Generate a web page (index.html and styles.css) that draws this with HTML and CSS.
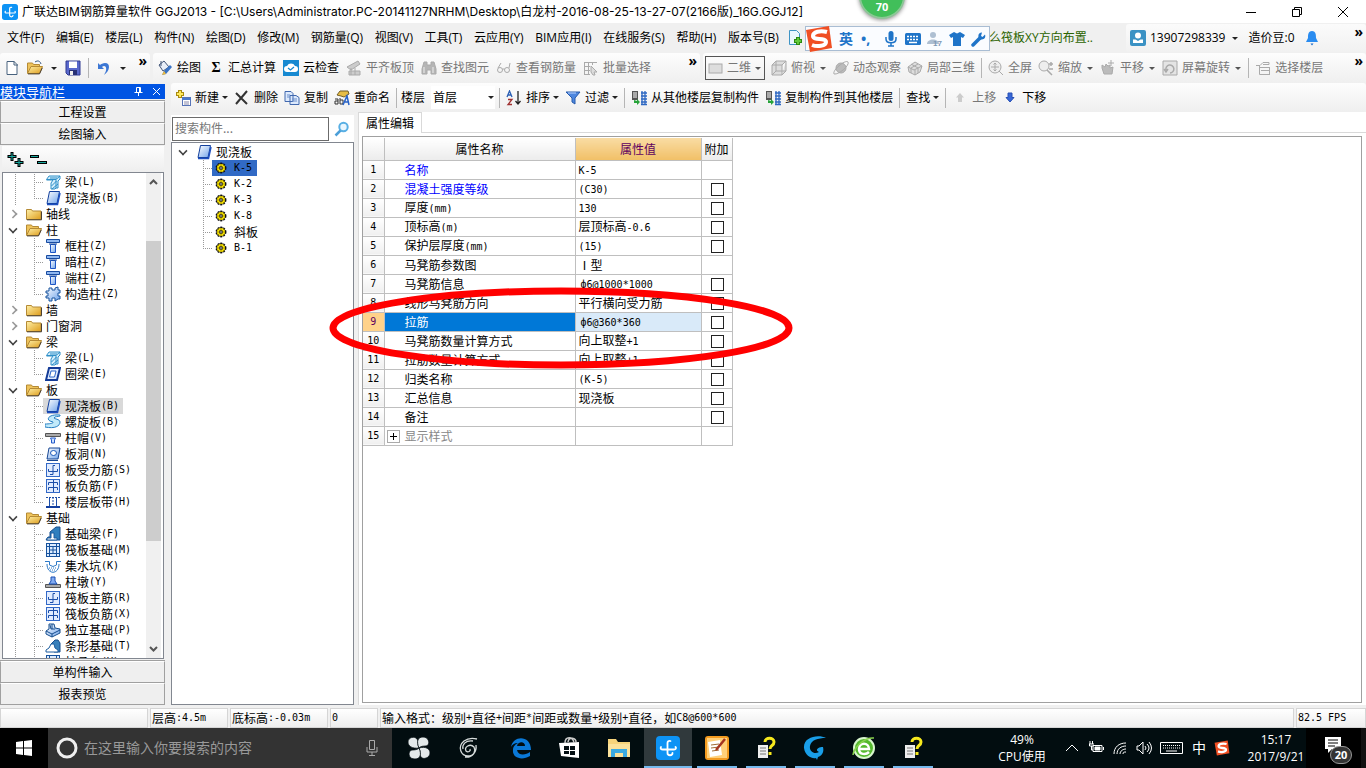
FILE: index.html
```html
<!DOCTYPE html>
<html lang="zh-CN">
<head>
<meta charset="utf-8">
<title>广联达BIM钢筋算量软件 GGJ2013</title>
<link rel="stylesheet" href="styles.css">
</head>
<body>
<svg class="defs" aria-hidden="true">
<defs>
<linearGradient id="gb" x1="0" y1="0" x2="1" y2="1"><stop offset="0" stop-color="#fff"/><stop offset="1" stop-color="#6fa3ea"/></linearGradient>
<linearGradient id="gy" x1="0" y1="0" x2="1" y2="1"><stop offset="0" stop-color="#fff0a8"/><stop offset="1" stop-color="#dd9c1c"/></linearGradient>
</defs>
<symbol id="logo" viewBox="0 0 24 24"><rect width="24" height="24" rx="4" fill="#0d93f5"/><path d="M14.500 5c-2-.5-3 .5-3 2v10c0 3 5 3 5 0M5 11c-1 1.500 0 2.500 2 2.500h11c2 0 2.500-1.500 1.500-2.500" fill="none" stroke="#fff" stroke-width="1.800" stroke-linecap="round"/></symbol>
<symbol id="fold" viewBox="0 0 16 16"><path d="M.5 13.500v-10h5l1 1.500h8.500v8.500z" fill="url(#gy)" stroke="#b58a35"/><path d="M1 13.800h14.500V5.500" fill="none" stroke="#4b4033"/></symbol>
<symbol id="open" viewBox="0 0 16 16"><path d="M.5 13v-10h5l1 1.500h6V7" fill="#eec35b" stroke="#b58a35"/><path d="M.5 13.500 4 6.500h11.500l-3 7z" fill="url(#gy)" stroke="#b58a35"/><path d="M1 13.900h11.500l2.800-6" fill="none" stroke="#4b4033"/></symbol>
<symbol id="slab" viewBox="0 0 16 16"><path d="M4.500 1.500h10l-2.500 12h-10z" fill="url(#gb)" stroke="#123f9c"/><path d="M2 14.500h10.500L15 3" fill="none" stroke="#1d4fc0" stroke-width="1.500"/></symbol>
<symbol id="beam" viewBox="0 0 16 16"><path d="M1.500 5.500 4 2h11v3l-2 2v7h-2l-1 1H6V9l2-3H1.500z" fill="#d3eefb" stroke="#2f8fc8"/><path d="M2 5.500h9l4-3.500M6.500 12l5-5M7 15l6-5M11 6v8M5 4h7" stroke="#2f8fc8" fill="none"/></symbol>
<symbol id="col" viewBox="0 0 16 16"><path d="M1.500 1.500h13v3h-13z" fill="#8fb7f0" stroke="#184ba0"/><path d="M5.500 6.500h5v8h-5z" fill="url(#gb)" stroke="#1d55c5"/><path d="M2 4.500h12M4 6h8" stroke="#184ba0"/></symbol>
<symbol id="gz" viewBox="0 0 16 16"><path d="M4 2h3v2h3V2l3-1v3h2v3h-2v3h2v3h-2l-3 2v-3H7v3H4v-3H1v-2h2V7H1V5h3z" fill="url(#gb)" stroke="#17529d"/></symbol>
<symbol id="ring" viewBox="0 0 16 16"><path d="M4 2h11l-3 12H1z" fill="#dfeafd" stroke="#143b97" stroke-width="2"/><path d="M6 5h5l-1.500 6h-5z" fill="#fff" stroke="#2c66c9"/></symbol>
<symbol id="spiral" viewBox="0 0 16 16"><path d="M15 1C4 0 1 5 5 7l3 1c1 1-3 2-8 2v3c10 2 15-1 15-5 0-3-6-3-6-4 1-2 4-1 6-2z" fill="#c2eafa" stroke="#277fc2"/></symbol>
<symbol id="cap" viewBox="0 0 16 16"><path d="M.5 3.500h15v3H.5z" fill="#aaa" stroke="#555"/><path d="M5.500 8h5l-1 2v3h-3v-3z" fill="#cce1ff" stroke="#2359c8"/></symbol>
<symbol id="hole" viewBox="0 0 16 16"><path d="M4 2h11l-2 11H2z" fill="url(#gb)" stroke="#174693"/><ellipse cx="8.500" cy="7" rx="3" ry="2.500" fill="#fff" stroke="#1958b8"/><path d="M2 14.500h11" stroke="#174693"/></symbol>
<symbol id="bar1" viewBox="0 0 16 16"><rect x="1.500" y="1.500" width="13" height="13" fill="#e1ecff" stroke="#3369c7"/><path d="M10 3.500H8v9H5M3.500 7v2.500h9V7" stroke="#1d4fa9" fill="none"/></symbol>
<symbol id="bar2" viewBox="0 0 16 16"><rect x="1.500" y="1.500" width="13" height="13" fill="#e1ecff" stroke="#3369c7"/><path d="M8.500 2v12M3.500 7V4.500h9V7M3.500 12V9.500h9V12" stroke="#1d4fa9" fill="none"/></symbol>
<symbol id="band" viewBox="0 0 16 16"><path d="M1 13h14" stroke="#123e9f" stroke-width="2"/><path d="M4.500 4v8M11.500 4v8" stroke="#1d4fa9"/><path d="M1 3.500h14M8 3v9" stroke="#1d4fa9" stroke-dasharray="2 1"/></symbol>
<symbol id="fbeam" viewBox="0 0 16 16"><path d="m1 14 2-3h2V6l6-5h4v13z" fill="#2f7fbe" stroke="#174e8e"/><path d="M2 14v-2h4V7h3v5h3v2z" fill="#fff" stroke="#1c5d9f"/></symbol>
<symbol id="raft" viewBox="0 0 16 16"><rect x="1.500" y="1.500" width="13" height="13" fill="#dcecff" stroke="#17529d"/><path d="M4.500 1v14M11.500 1v14M1 4.500h14M1 11.500h14M4 8h8M8 4v8" stroke="#17529d" fill="none"/></symbol>
<symbol id="pit" viewBox="0 0 16 16"><path d="M0 3.500h4.500V7q3.500 3 7 0V3.500H16M2 6c0 11 12 11 12 0" fill="none" stroke="#2c79c8"/><path d="M4 10h8M5 12h6" stroke="#2c79c8" stroke-dasharray="1 1"/></symbol>
<symbol id="pier" viewBox="0 0 16 16"><path d="M.5 10.500h15v3H.5z" fill="#aaa" stroke="#555"/><path d="m4 10 2-3V3h4v4l2 3z" fill="#82abf1" stroke="#184fb3"/></symbol>
<symbol id="indep" viewBox="0 0 16 16"><path d="m1 9 3-2V2h5l1 4 5 1v4l-8 4-6-3z" fill="url(#gb)" stroke="#174e8e"/><path d="m1 9 6 3 8-4M7 12v3M5 3l1 4h4M7 2v5" fill="none" stroke="#174e8e"/></symbol>
<symbol id="strip" viewBox="0 0 16 16"><path d="m6 6 4-4h3l2 3v9H9z" fill="#377fba" stroke="#174e8e"/><path d="M1 14v-2l3-2 2-4h3l1 4 3 2v2z" fill="#fff" stroke="#1c5d9f"/></symbol>
<symbol id="gear" viewBox="0 0 12 12"><circle cx="6" cy="6" r="4.700" fill="#111" stroke="#111" stroke-width="1.500" stroke-dasharray="1.800 1.200"/><circle cx="6" cy="6" r="4" fill="#ffe900"/><path d="M6 2v8M2 6h8M3 3l6 6M9 3l-6 6" stroke="#665b00" stroke-width=".6"/><circle cx="6" cy="6" r="1.300" fill="#fff" stroke="#111"/></symbol>
<symbol id="copyfl" viewBox="0 0 16 16"><path d="M1 1h6v9H1z" fill="#555"/><path d="M2 3h4M2 5h4M2 7h4" stroke="#fff"/><path d="M11 1v14M14 1v14M10 3h6M10 6h6M10 9h6M10 12h6M10 14.500h6" stroke="#2d67c2" stroke-width="1.300"/><path d="M3 10v3h3v2l3-3-3-3v2z" fill="#27a33a"/></symbol>
<symbol id="help" viewBox="0 0 24 24"><path d="M4 9h10v13H4z" fill="#eee"/><path d="M6 12h6M6 15h6M6 18h6" stroke="#777"/><path d="M11 6c0-5 9-5 9 0 0 4-4 3-4 7M16 16v3" fill="none" stroke="#f7e91d" stroke-width="3"/></symbol>
<symbol id="sogou" viewBox="0 0 28 28"><path d="M1 5 24 1l3 22-22 4z" fill="#f04f23"/><path d="M22 7C15 5 8 7 8 11c0 5 13 1 13 6 0 4-9 5-14 3" fill="none" stroke="#fff" stroke-width="4"/></symbol>
</svg>

<div class="window">
<header class="title">
  <svg class="i16"><use href="#logo"/></svg>
  <h1>广联达BIM钢筋算量软件 GGJ2013 - [C:\Users\Administrator.PC-20141127NRHM\Desktop\白龙村-2016-08-25-13-27-07(2166版)_16G.GGJ12]</h1>
  <div class="winbtns">
    <button aria-label="最小化"><svg viewBox="0 0 12 12"><path d="M1 6.500h10" /></svg></button>
    <button aria-label="还原"><svg viewBox="0 0 12 12"><path d="M1.500 3.500h7v7h-7zM3.500 3V1.500h7v7H9"/></svg></button>
    <button aria-label="关闭"><svg viewBox="0 0 12 12"><path d="m1 1 10 10M11 1 1 11"/></svg></button>
  </div>
</header>
<div class="ball">70</div>

<div class="menubar">
  <nav class="menus">
    <button>文件(F)</button><button>编辑(E)</button><button>楼层(L)</button><button>构件(N)</button><button>绘图(D)</button><button>修改(M)</button><button>钢筋量(Q)</button><button>视图(V)</button><button>工具(T)</button><button>云应用(Y)</button><button>BIM应用(I)</button><button>在线服务(S)</button><button>帮助(H)</button><button>版本号(B)</button>
  </nav>
  <button class="newdoc" aria-label="新建文档"><svg class="i16" viewBox="0 0 16 16"><path d="M2.500.5h7l3 3v11h-10z" fill="#eaf7ff" stroke="#3f94c5"/><path d="M11 7v8M7 11h8" stroke="#2c8a12" stroke-width="4"/><path d="M11 8v6M8 11h6" stroke="#62c93a" stroke-width="2"/></svg></button>
  <a class="tip" href="#">么筏板XY方向布置..</a>
  <div class="account">
    <button><svg class="i16" viewBox="0 0 16 16"><rect width="16" height="16" rx="2" fill="#3b92c4"/><circle cx="8" cy="5.500" r="3" fill="#fff"/><path d="M3 13V9.500h2.500L8 11l2.500-1.500H13V13z" fill="#fff"/></svg><span>13907298339</span><i class="dd"></i></button>
    <span>造价豆:0</span>
    <svg class="i16" viewBox="0 0 16 16"><path d="M8 1c-4 0-4 4-4 7l-2 4h12l-2-4c0-3 0-7-4-7z" fill="#2a8cf0"/><path d="M6.500 13.500h3L8 15.500z" fill="#1769c9"/></svg>
    <button class="more">»</button>
  </div>
  <div class="ime">
    <svg class="sg"><use href="#sogou"/></svg><b>英</b><b>•,</b>
    <svg class="i16" viewBox="0 0 16 16"><rect x="5.500" y="0" width="5" height="10" rx="2.500" fill="#1f74c8"/><path d="M3 6v2c0 5 10 5 10 0V6M8 12v3M5 15h6" fill="none" stroke="#1f74c8" stroke-width="1.500"/></svg>
    <svg class="i16" viewBox="0 0 16 16"><rect y="2" width="16" height="12" rx="1.500" fill="#1f74c8"/><path d="M2 5.500h12M2 8.500h12" stroke="#fff" stroke-width="1.500" stroke-dasharray="2 1"/><path d="M4 11.500h8" stroke="#fff" stroke-width="1.500"/></svg>
    <svg class="i16" viewBox="0 0 16 16"><circle cx="6" cy="4" r="3" fill="#aebfd2"/><path d="M0 13c0-6 12-6 12 0z" fill="#aebfd2"/><text x="6" y="15" class="n17">17</text></svg>
    <svg class="i16" viewBox="0 0 16 16"><path d="m5 1 3 1.500L11 1l5 3-2 3-2-1v9H4V6L2 7 0 4z" fill="#1f74c8"/></svg>
    <svg class="i16" viewBox="0 0 16 16"><path d="M2 14 9 7" stroke="#1f74c8" stroke-width="3.500" stroke-linecap="round"/><path d="M14 3.500A3.500 3.500 0 1 1 11 1.500L10 5l1.500 1z" fill="#1f74c8"/></svg>
  </div>
</div>

<div class="bars">
  <div class="bar quick">
    <button aria-label="新建"><svg class="i16" viewBox="0 0 16 16"><path d="M3 1.500h7l3 3v10H3z" fill="#fff" stroke="#48627e"/><path d="M10 1v4h4" fill="none" stroke="#48627e"/></svg></button>
    <button aria-label="打开"><svg class="i16" viewBox="0 0 16 16"><use href="#open"/><path d="M8 2c3-2 5-1 6 2" fill="none" stroke="#375a84"/></svg><i class="dd"></i></button>
    <button aria-label="保存"><svg class="i16" viewBox="0 0 16 16"><path d="M1 1h14v14H3l-2-2z" fill="#5968cc" stroke="#303a91"/><path d="M4 1.500h8V8H4z" fill="#fff"/><path d="M4 10h8v5H4z" fill="#273075"/><path d="M5 11h3v4H5z" fill="#eee"/></svg></button>
    <i class="sep"></i>
    <button aria-label="撤销"><svg class="i16" viewBox="0 0 16 16"><path d="M2 3v6h6L6 7c3-3 6 1 3 6l-1 2c6-4 7-12 1-12-2 0-4 1-5 2z" fill="#3c77d4"/></svg><i class="dd"></i></button>
    <button class="more">»</button>
  </div>
  <div class="bar draw">
    <button><svg class="i16" viewBox="0 0 16 16"><path d="m2 5 5-4 5 6-6 4z" fill="#e8eef8" stroke="#405477"/><path d="M4 1v5" stroke="#405477"/><path d="m15 7-6 7-4 1 2-4 6-6z" fill="#3973c6"/><path d="m7 11 2 3-4 1z" fill="#f2bd3b"/></svg>绘图</button>
    <button><span class="sigma">Σ</span>汇总计算</button>
    <button><svg class="i16" viewBox="0 0 16 16"><rect width="16" height="16" fill="#1689d1"/><path d="M4 12a3 3 0 0 1 0-6 4.500 4.500 0 0 1 8 0 3 3 0 0 1 0 6z" fill="#fff"/><path d="m5 8 2.500 2L11 7" fill="none" stroke="#1689d1" stroke-width="1.300"/></svg>云检查</button>
    <button disabled><svg class="i16" viewBox="0 0 16 16"><path d="m1 7 11-6 2 3-9 6zM3 11h11v4H3z" fill="#ccc"/><path d="M5 8v7M9 8v7"/></svg>平齐板顶</button>
    <button disabled><svg class="i16" viewBox="0 0 16 16"><path d="M3 2h3v3h4V2h3l2 7v5h-5v-4H6v4H1V9z" fill="#b5b5b5"/><path d="M3 7v6M12 7v6" stroke="#eee"/></svg>查找图元</button>
    <button disabled><svg class="i16" viewBox="0 0 16 16"><circle cx="4" cy="10" r="2.500"/><circle cx="11" cy="10" r="2.500"/><path d="M2 8 5 3M13 8l1-5M6.500 9h2"/></svg>查看钢筋量</button>
    <button disabled><svg class="i16" viewBox="0 0 16 16"><path d="M1 2.500h13M1 6.500h6M1 10.500h6M1.500 2v12M5.500 2v12M9.500 2v3M1 14.500h6"/><path d="m8 6 6 6h-3l1 3-2 0-2-3z" fill="#ddd"/></svg>批量选择</button>
    <button class="more">»</button>
  </div>
  <div class="bar view">
    <button class="combo" disabled><svg class="i16" viewBox="0 0 16 16"><rect x="1" y="4" width="13" height="9" fill="#ddd"/></svg>二维<i class="dd"></i></button>
    <button disabled><svg class="i16" viewBox="0 0 16 16"><path d="M1 5h10v10H1zM1 5l4-4h10L11 5M15 1v10l-4 4" fill="#ddd"/><path d="M5 1v10h10M5 11l-4 4"/></svg>俯视<i class="dd"></i></button>
    <button disabled><svg class="i16" viewBox="0 0 16 16"><circle cx="8" cy="8" r="5" fill="#bbb"/><path d="M1 14C-1 10 13-1 15 2s-9 13-14 12z"/></svg>动态观察</button>
    <button disabled><svg class="i16" viewBox="0 0 16 16"><path d="m1 7 7-5 7 4-2 6-5 3-6-3z" fill="#ddd"/><path d="m1 7 6 3 8-4M8 10v5M4 4l7 4v5M11 4 4 8v5"/></svg>局部三维</button>
    <i class="sep"></i>
    <button disabled><svg class="i16" viewBox="0 0 16 16"><circle cx="7" cy="7" r="6" fill="#eee"/><path d="M7 3v8M3 7h8M5.500 4.500 7 3l1.500 1.500M5.500 9.500 7 11l1.500-1.500M11 11l4 4"/></svg>全屏</button>
    <button disabled><svg class="i16" viewBox="0 0 16 16"><circle cx="6" cy="6" r="5" fill="#eee"/><path d="m9 10 5 5M11 4h4M13 2v4M11 9h4" stroke-width="1.500"/></svg>缩放<i class="dd"></i></button>
    <button disabled><svg class="i16" viewBox="0 0 16 16"><path d="M2 8V5l3 2 1-3 2 2 2-1v3l3-1-1 7H4z" fill="#bbb"/><path d="M11 0v6M8 3h6"/></svg>平移<i class="dd"></i></button>
    <button disabled><svg class="i16" viewBox="0 0 16 16"><path d="M1 1h14v14H1z" fill="#e4e4e4"/><path d="M4 10a4 4 0 1 1 4 3M2 9l2 3 2-3" stroke-width="1.500"/></svg>屏幕旋转<i class="dd"></i></button>
    <i class="sep"></i>
    <button disabled><svg class="i16" viewBox="0 0 16 16"><path d="M1 5.500h4l3-3h6v2H8M4.500 5v9.500H15M4 7.500h10M6 10.500h8M14.500 7v7"/></svg>选择楼层</button>
    <button class="more">»</button>
  </div>
</div>

<div class="work">
  <aside class="dock">
    <div class="dockhead"><h2>模块导航栏</h2>
      <button aria-label="固定"><svg viewBox="0 0 9 9"><path d="M2.500 5V.5h4V5M5.500 1v4M.5 5.500h8M4.500 6v3"/></svg></button>
      <button aria-label="关闭"><svg viewBox="0 0 9 9"><path d="m1 1 7 7M8 1 1 8"/></svg></button>
    </div>
    <button class="mod">工程设置</button>
    <button class="mod">绘图输入</button>
    <div class="navbox">
      <div class="plusminus">
        <button aria-label="全部展开"><svg viewBox="0 0 17 15"><path d="M5 0v9M.5 4.500h9M12 6v9M7.500 10.500h9" stroke="#000" stroke-width="3"/><path d="M5 1v7M1.500 4.500h7M12 7v7M8.500 10.500h7" stroke="#18a79d"/></svg></button>
        <button aria-label="全部折叠"><svg viewBox="0 0 17 15"><path d="M0 4.500h9M7 10.500h10" stroke="#000" stroke-width="3"/><path d="M1 4.500h7M8 10.500h8" stroke="#18a79d"/></svg></button>
      </div>
      <div class="treewrap">
        <div class="tree">
          <ul class="kids"><li><button><svg><use href="#beam"/></svg>梁<s>(L)</s></button></li><li><button><svg><use href="#slab"/></svg>现浇板<s>(B)</s></button></li></ul>
          <button class="par shut"><svg><use href="#fold"/></svg>轴线</button>
          <button class="par"><svg><use href="#open"/></svg>柱</button>
          <ul class="kids"><li><button><svg><use href="#col"/></svg>框柱<s>(Z)</s></button></li><li><button><svg><use href="#col"/></svg>暗柱<s>(Z)</s></button></li><li><button><svg><use href="#col"/></svg>端柱<s>(Z)</s></button></li><li><button><svg><use href="#gz"/></svg>构造柱<s>(Z)</s></button></li></ul>
          <button class="par shut"><svg><use href="#fold"/></svg>墙</button>
          <button class="par shut"><svg><use href="#fold"/></svg>门窗洞</button>
          <button class="par"><svg><use href="#open"/></svg>梁</button>
          <ul class="kids"><li><button><svg><use href="#beam"/></svg>梁<s>(L)</s></button></li><li><button><svg><use href="#ring"/></svg>圈梁<s>(E)</s></button></li></ul>
          <button class="par"><svg><use href="#open"/></svg>板</button>
          <ul class="kids"><li><button class="cur"><svg><use href="#slab"/></svg>现浇板<s>(B)</s></button></li><li><button><svg><use href="#spiral"/></svg>螺旋板<s>(B)</s></button></li><li><button><svg><use href="#cap"/></svg>柱帽<s>(V)</s></button></li><li><button><svg><use href="#hole"/></svg>板洞<s>(N)</s></button></li><li><button><svg><use href="#bar1"/></svg>板受力筋<s>(S)</s></button></li><li><button><svg><use href="#bar2"/></svg>板负筋<s>(F)</s></button></li><li><button><svg><use href="#band"/></svg>楼层板带<s>(H)</s></button></li></ul>
          <button class="par"><svg><use href="#open"/></svg>基础</button>
          <ul class="kids"><li><button><svg><use href="#fbeam"/></svg>基础梁<s>(F)</s></button></li><li><button><svg><use href="#raft"/></svg>筏板基础<s>(M)</s></button></li><li><button><svg><use href="#pit"/></svg>集水坑<s>(K)</s></button></li><li><button><svg><use href="#pier"/></svg>柱墩<s>(Y)</s></button></li><li><button><svg><use href="#bar1"/></svg>筏板主筋<s>(R)</s></button></li><li><button><svg><use href="#bar2"/></svg>筏板负筋<s>(X)</s></button></li><li><button><svg><use href="#indep"/></svg>独立基础<s>(P)</s></button></li><li><button><svg><use href="#strip"/></svg>条形基础<s>(T)</s></button></li><li><button><svg><use href="#raft"/></svg>桩承台<s>(V)</s></button></li></ul>
        </div>
        <div class="scroll"><svg viewBox="0 0 9 6"><path d="m1 5 3.500-3.500L8 5"/></svg><i></i><svg viewBox="0 0 9 6"><path d="m1 1 3.500 3.500L8 1"/></svg></div>
      </div>
    </div>
    <button class="mod">单构件输入</button>
    <button class="mod">报表预览</button>
  </aside>

  <section class="main">
    <div class="bar edit">
      <button><svg class="i16" viewBox="0 0 16 16"><path d="M5 0v8M1 4h8" stroke="#a98a10" stroke-width="4"/><path d="M5 1v6M2 4h6" stroke="#ffe95b" stroke-width="2"/><rect x="7.500" y="7.500" width="8" height="8" fill="#fff" stroke="#5774b8"/><path d="M7 9h9" stroke="#4778ce" stroke-width="2"/><path d="M9 12h5M9 14h5" stroke="#88a"/></svg>新建<i class="dd"></i></button>
      <button><svg class="i16" viewBox="0 0 16 16"><path d="m2 3 11 11M13 1 2 14" stroke="#333" stroke-width="2"/></svg>删除</button>
      <button><svg class="i16" viewBox="0 0 16 16"><path d="M1 1.500h6l2 2v8H1zM6 5.500h6l3 2v7H6z" fill="#dce9fc" stroke="#4168ae"/><path d="M8 9h5M8 11h5M3 5h3M3 7h3" stroke="#6d8fcb"/></svg>复制</button>
      <button><svg class="i16" viewBox="0 0 16 16"><path d="m3 5 3-4h8l1 3-5 3-3-1z" fill="#e7bd45" stroke="#735e28"/><path d="M1 9h3v5H1v-3h3M6 8v6h3v-4H6" fill="none" stroke="#333"/><path d="m9 15 4-9 2 9M11 12h4" fill="none" stroke="#2863c8" stroke-width="1.500"/></svg>重命名</button>
      <i class="sep"></i>
      <label for="floor">楼层</label>
      <span class="floor"><select id="floor"><option>首层</option></select><i class="dd"></i></span>
      <i class="sep"></i>
      <button><svg class="i16" viewBox="0 0 16 16"><path d="m1 7 2.500-6L6 7M2 5h3" stroke="#2b5fb4" fill="none" stroke-width="1.300"/><path d="M2 9.500h4l-4 5h4" stroke="#a03030" fill="none" stroke-width="1.300"/><path d="M12 1v13M9.500 11l2.500 3 2.500-3" fill="none" stroke="#222" stroke-width="1.300"/></svg>排序<i class="dd"></i></button>
      <button><svg class="i16" viewBox="0 0 16 16"><path d="M1 2h14L10 8v6l-3-2V8z" fill="#4e87df" stroke="#275aab"/><path d="M3 3h8" stroke="#b9d4ff"/></svg>过滤<i class="dd"></i></button>
      <i class="sep"></i>
      <button><svg class="i16"><use href="#copyfl"/></svg>从其他楼层复制构件</button>
      <button><svg class="i16"><use href="#copyfl"/></svg>复制构件到其他楼层</button>
      <i class="sep"></i>
      <button>查找<i class="dd"></i></button>
      <i class="sep"></i>
      <button disabled><svg class="i16" viewBox="0 0 16 16"><path d="m8 3 4 4.500h-2V12H6V7.500H4z" fill="#ccc"/></svg>上移</button>
      <button><svg class="i16" viewBox="0 0 16 16"><path d="m8 12 4-4.500h-2V3H6v4.500H4z" fill="#3767d6" stroke="#2850b5"/></svg>下移</button>
    </div>
    <div class="panes">
      <div class="parts">
        <div class="search"><input type="text" placeholder="搜索构件..." aria-label="搜索构件"><button aria-label="搜索"><svg class="i16" viewBox="0 0 16 16"><circle cx="9.500" cy="6" r="4.200" fill="#e8f6ff" stroke="#58afe4" stroke-width="2"/><path d="m6.500 9.500-5 5" stroke="#4c9fd8" stroke-width="2.500"/></svg></button></div>
        <div class="list">
          <button class="par"><svg><use href="#slab"/></svg>现浇板</button>
          <ul class="kids"><li><button class="sel"><svg><use href="#gear"/></svg><s>K-5</s></button></li><li><button><svg><use href="#gear"/></svg><s>K-2</s></button></li><li><button><svg><use href="#gear"/></svg><s>K-3</s></button></li><li><button><svg><use href="#gear"/></svg><s>K-8</s></button></li><li><button><svg><use href="#gear"/></svg>斜板</button></li><li><button><svg><use href="#gear"/></svg><s>B-1</s></button></li></ul>
        </div>
      </div>
      <div class="props">
        <div class="tabs"><button>属性编辑</button></div>
        <div class="page"><div class="frame">
          <table>
            <colgroup><col class="c1"><col class="c2"><col class="c3"><col class="c4"></colgroup>
            <thead><tr><th></th><th>属性名称</th><th class="hot">属性值</th><th>附加</th></tr></thead>
            <tbody>
              <tr><th>1</th><td class="blue">名称</td><td><s>K-5</s></td><td></td></tr>
              <tr><th>2</th><td class="blue">混凝土强度等级</td><td><s>(C30)</s></td><td><input type="checkbox" aria-label="附加 混凝土强度等级"></td></tr>
              <tr><th>3</th><td>厚度<s>(mm)</s></td><td><s>130</s></td><td><input type="checkbox" aria-label="附加 厚度"></td></tr>
              <tr><th>4</th><td>顶标高<s>(m)</s></td><td>层顶标高<s>-0.6</s></td><td><input type="checkbox" aria-label="附加 顶标高"></td></tr>
              <tr><th>5</th><td>保护层厚度<s>(mm)</s></td><td><s>(15)</s></td><td><input type="checkbox" aria-label="附加 保护层厚度"></td></tr>
              <tr><th>6</th><td>马凳筋参数图</td><td>Ⅰ型</td><td></td></tr>
              <tr><th>7</th><td>马凳筋信息</td><td class="rb"><s>ф6@1000*1000</s></td><td><input type="checkbox" aria-label="附加 马凳筋信息"></td></tr>
              <tr><th>8</th><td>线形马凳筋方向</td><td>平行横向受力筋</td><td><input type="checkbox" aria-label="附加 线形马凳筋方向"></td></tr>
              <tr class="active"><th>9</th><td>拉筋</td><td class="rb"><s>ф6@360*360</s></td><td><input type="checkbox" aria-label="附加 拉筋"></td></tr>
              <tr><th>10</th><td>马凳筋数量计算方式</td><td>向上取整<s>+1</s></td><td><input type="checkbox" aria-label="附加 马凳筋数量计算方式"></td></tr>
              <tr><th>11</th><td>拉筋数量计算方式</td><td>向上取整<s>+1</s></td><td><input type="checkbox" aria-label="附加 拉筋数量计算方式"></td></tr>
              <tr><th>12</th><td>归类名称</td><td><s>(K-5)</s></td><td><input type="checkbox" aria-label="附加 归类名称"></td></tr>
              <tr><th>13</th><td>汇总信息</td><td>现浇板</td><td><input type="checkbox" aria-label="附加 汇总信息"></td></tr>
              <tr><th>14</th><td>备注</td><td></td><td><input type="checkbox" aria-label="附加 备注"></td></tr>
              <tr class="grp"><th>15</th><td><button aria-label="展开"><svg viewBox="0 0 9 9"><path d="M4.500 1v7M1 4.500h7"/></svg></button>显示样式</td><td></td><td></td></tr>
            </tbody>
          </table>
          <svg class="mark" viewBox="0 0 464 82"><ellipse cx="232" cy="41" rx="228" ry="37"/></svg>
        </div></div>
      </div>
    </div>
  </section>
</div>

<footer class="status">
  <span class="s1"></span><span class="s2">层高<s>:4.5m</s></span><span class="s3">底标高<s>:-0.03m</s></span><span class="s4"><s>0</s></span><span class="s5">输入格式：级别<s>+</s>直径<s>+</s>间距<s>*</s>间距或数量<s>+</s>级别<s>+</s>直径，如<s>C8@600*600</s></span><span class="s6"><s>82.5 FPS</s></span>
</footer>
</div>

<div class="taskbar">
  <button class="start" aria-label="开始"><svg viewBox="0 0 16 16"><path d="m0 2 7-1v6.500H0zM8 1l8-1v7.500H8zM0 8.500h7V15l-7-1zM8 8.500h8V16l-8-1z" fill="#fff"/></svg></button>
  <div class="find"><svg class="cort" viewBox="0 0 22 22"><circle cx="11" cy="11" r="9"/></svg><input type="text" placeholder="在这里输入你要搜索的内容" aria-label="搜索"><svg class="i16" viewBox="0 0 16 16"><path d="M5.500.5h5v9h-5zM3 7v5h10V7M8 12v3M5 15.500h6" fill="none" stroke="#aaa"/></svg></div>
  <div class="apps">
    <button aria-label="风扇"><svg viewBox="0 0 24 24"><g fill="#e4e9ea" stroke="#020d10" stroke-width=".8"><path d="M12 12C5 13 1 10 1 6c0-5 7-6 9-3 2 2 0 5 2 9z"/><path d="M12 12C9 5 11 1 16 1c5 0 7 5 5 8-2 2-6 0-9 3z"/><path d="M12 12c7-2 11 1 11 5 0 5-7 7-9 4-2-2 0-5-2-9z"/><path d="M12 12c3 7 1 11-4 11-6 0-7-5-5-8 2-2 6 0 9-3z"/></g></svg></button>
    <button aria-label="浏览器"><svg viewBox="0 0 24 24"><path d="M21 3c-4-1-9-1-13 2-7 6-3 15 4 15 6 0 8-5 6-9-4-4-10 0-8 4 2 2 5 0 4-2M20 9c1 7-4 13-11 12M17 5C9 4 6 9 7 13" fill="none" stroke="#d7dcdc" stroke-width="1.300"/></svg></button>
    <button class="pinned" aria-label="Edge"><svg viewBox="0 0 24 24"><path d="M2 11C4-1 22-1 22 14H8c1 6 9 5 13 2v4C13 25 3 22 4 14c0-4 3-6 5-7-4 0-6 2-7 4zm6-1h8c0-5-7-5-8 0z" fill="#0a78d7"/></svg></button>
    <button aria-label="商店"><svg viewBox="0 0 24 24"><path d="m1 7 20-1v16L3 20z" fill="#fff"/><path d="M7 7c0-7 8-7 9 0M10 6c1-6 8-4 8 0" fill="none" stroke="#ccc" stroke-width="1.500"/><path d="M6 10h5v4H6zM12 10h5v4h-5zM6 15h5v3H6zM12 15h5v4h-5z" fill="#051014"/></svg></button>
    <button aria-label="资源管理器"><svg viewBox="0 0 24 24"><path d="M1 3h8l2 3h12v15H1z" fill="#f7d47b"/><path d="M1 8h22v13H1z" fill="#fce29b"/><path d="M4 21v-8h16v8h-4v-4H8v4z" fill="#3aaae2"/></svg></button>
    <button class="on" aria-label="GGJ"><svg><use href="#logo"/></svg></button>
    <button class="run" aria-label="笔记"><svg viewBox="0 0 24 24"><rect width="24" height="24" rx="3" fill="#f39b20"/><rect x="2" y="2" width="20" height="20" fill="#ffd079"/><path d="m3 6 12-2 2 15-12 2z" fill="#fff"/><path d="m6 9 8-1M6 12l8-1M7 15l7-1" stroke="#a06b35"/><path d="m11 14 9-11" stroke="#a4331f" stroke-width="2.500"/></svg></button>
    <button class="run" aria-label="帮助文件"><svg><use href="#help"/></svg></button>
    <button class="run" aria-label="广联达"><svg viewBox="0 0 24 24"><path d="M23 2C15-2 0 1 1 12c1 8 8 11 12 10l1 2 1-3c5-2 6-6 5-10-6 0-8 4-4 5-5 3-10-1-9-6 1-6 8-8 16-8z" fill="#199ee8"/></svg></button>
    <button class="run" aria-label="360"><svg viewBox="0 0 24 24"><circle cx="12" cy="12" r="10" fill="#55b92e" stroke="#d8f6cd" stroke-width="2"/><path d="M7 13h10c0-7-10-7-10 0 0 6 7 6 10 3" fill="none" stroke="#fff" stroke-width="2.500"/><path d="M1 19C2 11 13 1 22 2" fill="none" stroke="#89d24e" stroke-width="1.500"/></svg></button>
    <button class="run" aria-label="帮助文件 2"><svg><use href="#help"/></svg></button>
  </div>
  <div class="cpu">49%<br>CPU使用</div>
  <div class="tray">
    <svg class="i16" viewBox="0 0 16 16"><path d="m2 11 6-6 6 6"/></svg>
    <svg class="i16" viewBox="0 0 16 16"><path d="M5 5.500h9v6H5zM1 4h5M2 1v3M4.500 1v3M1.500 4v2h4M3.500 6v4H5M15.500 7v3"/><path d="M7 7h5v3H7z" fill="#fff"/></svg>
    <svg class="i16" viewBox="0 0 16 16"><path d="M2 14C2 7 7 3 14 3M5 14c0-5 4-8 9-8M8 14c0-3 3-5 6-5M11 14c0-2 1-2 3-2" /></svg>
    <svg class="i16" viewBox="0 0 16 16"><path d="M1 6v4h2l4 4V2L3 6zM9 6q2 2 0 4M11 4q4 4 0 8M13 2q5 6 0 12"/></svg>
    <svg class="kb" viewBox="0 0 24 14"><path d="M.5 1.500h22v11H.5z"/><path d="M3 4.500h18M3 7h18" stroke-dasharray="1 1"/><path d="M6 10h11"/></svg>
    <span>中</span>
    <svg class="i16"><use href="#sogou"/></svg>
  </div>
  <div class="clock">15:17<br>2017/9/21</div>
  <button class="note" aria-label="通知"><svg viewBox="0 0 28 28"><path d="M2 3h16v12H9l-4 4v-4H2z" fill="#fff"/><path d="M5 6h10M5 9h10M5 12h7" stroke="#000"/></svg><b>20</b></button>
</div>
</body>
</html>
```

FILE: styles.css
```css
* { box-sizing: border-box; }
html, body { height: 100%; margin: 0; }
body {
  display: flex; flex-direction: column; min-height: 100%; overflow: hidden; position: relative;
  background: #f0f0f0; color: #000;
  font: 12px/16px "Open Sans", "Noto Sans CJK SC", sans-serif;
}
button, input, select { font: inherit; color: inherit; }
button { border: 0; padding: 0; margin: 0; background: none; display: flex; align-items: center; white-space: nowrap; }
ul { list-style: none; margin: 0; padding: 0; }
h1, h2 { font: inherit; margin: 0; }
svg { display: block; flex: none; }
s { text-decoration: none; font-family: "DejaVu Sans Mono", monospace; font-size: 10px; }
.defs { position: absolute; width: 0; height: 0; }
.i16 { width: 16px; height: 16px; }
.window { flex: 1; min-height: 0; display: flex; flex-direction: column; }

.title { display: flex; align-items: center; height: 23px; padding-left: 2px; gap: 4px; background: #fff; }
.title h1 { flex: 1; white-space: nowrap; font-family: Inter, "Noto Sans CJK SC", sans-serif; }
.winbtns { display: flex; }
.winbtns button { width: 46px; height: 22px; justify-content: center; }
.winbtns svg { width: 12px; height: 12px; fill: none; stroke: #000; }
.ball { position: absolute; left: 859px; top: -27px; width: 46px; height: 46px; border-radius: 50%; background: #41bf5a; border: 2px solid #8bc796; box-shadow: 0 1px 4px #888; color: #fff; font-weight: bold; font-size: 11px; text-align: center; padding-top: 24px; }

.menubar { position: relative; display: flex; height: 30px; align-items: center; padding-left: 7px; background: #f0f0f0; }
.menus { display: flex; justify-content: space-between; width: 772px; }
.newdoc { margin-left: 8px; }
.tip { margin-left: auto; width: 137px; color: #2c6400; text-decoration: none; white-space: nowrap; }
.account { display: flex; align-items: center; gap: 9px; width: 240px; height: 28px; padding-left: 4px; background: linear-gradient(#fbfbfb, #f1f1f1); border-radius: 3px; }
.account button { gap: 4px; }
.account .dd { margin-left: 3px; }
.more { margin-left: auto; align-self: flex-start; font-size: 14px; line-height: 16px; font-weight: bold; padding-right: 3px; }
.ime { position: absolute; left: 805px; top: 3px; height: 25px; width: 185px; display: flex; align-items: center; gap: 6px; background: #fafcff; border: 1px solid #a9bdd3; }
.ime b { color: #1f74c8; font-size: 14px; width: 16px; }
.ime .sg { width: 28px; height: 28px; margin-left: -1px; }
.n17 { font: bold 8px "Liberation Sans", sans-serif; fill: #7d98b5; }

.bars { display: flex; height: 30px; gap: 3px; }
.bar { display: flex; align-items: center; gap: 7px; background: linear-gradient(#fdfdfd, #efefef); border-radius: 3px; white-space: nowrap; }
.bar button { gap: 4px; height: 24px; }
.bar button:disabled { color: #777; }
.bar button:disabled svg { fill: none; stroke: #aaa; }
.bar .more { height: 16px; }
.dd { flex: none; width: 0; border: 3px solid transparent; border-top-color: #222; border-bottom: 0; margin: 0 1px; }
button:disabled .dd { border-top-color: #555; }
.sep { width: 1px; height: 20px; background: #b5b5b5; }
.quick { width: 150px; padding-left: 4px; }
.quick button .dd { margin-left: 4px; }
.draw { width: 547px; padding-left: 4px; }
.view { flex: 1; padding-left: 2px; gap: 6px; }
.sigma { width: 16px; text-align: center; font: bold 14px/16px "Liberation Serif", serif; }
.bar .combo { border: 1px solid #555; padding: 0 2px; gap: 3px; }

.work { flex: 1; min-height: 0; display: flex; gap: 6px; }
.dock { width: 165px; display: flex; flex-direction: column; font-family: "Noto Sans CJK SC", sans-serif; padding-bottom: 1px; }
.dockhead { display: flex; align-items: center; height: 15px; margin: 1px 0 2px; background: #0054e3; color: #fff; line-height: 15px; }
.dockhead h2 { flex: 1; font-size: 13px; }
.dockhead button { width: 18px; height: 15px; justify-content: center; }
.dockhead svg { width: 9px; height: 9px; fill: none; stroke: #fff; }
.mod { height: 22px; flex: none; justify-content: center; border: 1px solid #a0a0a0; border-top-color: #fff; background: #efefef; box-shadow: 0 -1px #a0a0a0; }
.navbox { flex: 1; min-height: 0; display: flex; flex-direction: column; margin: 1px 1px 2px 2px; }
.plusminus { display: flex; gap: 6px; height: 26px; align-items: center; padding-left: 5px; background: linear-gradient(#fdfdfd, #eee); }
.plusminus svg { width: 17px; height: 15px; fill: none; }
.treewrap { flex: 1; min-height: 0; display: flex; padding-right: 2px; background: #fff; border: 1px solid #828790; }
.tree { flex: 1; min-width: 0; overflow: hidden; padding-top: 1px; }
.tree button, .list button { height: 16px; line-height: 16px; }
.tree svg, .list svg { width: 16px; height: 16px; }
.par { gap: 4px; padding-left: 4px; }
.par::before { content: ""; width: 6px; height: 6px; border: solid #444; border-width: 0 2px 2px 0; transform: rotate(45deg) scale(.8); margin: -3px 6px 0 2px; }
.par.shut::before { border-color: #999; transform: rotate(-45deg) scale(.8); margin: 0 6px 0 2px; }
.par svg { margin-left: -1px; }
.kids { margin-left: 12px; padding-left: 19px; background: repeating-linear-gradient(#999 0 1px, transparent 1px 2px) 0 0 / 1px 100% no-repeat; }
.kids li { display: flex; padding-left: 9px; height: 16px; background: repeating-linear-gradient(#999 0 1px, transparent 1px 2px) 0 0 / 1px 100% no-repeat, repeating-linear-gradient(90deg, #999 0 1px, transparent 1px 2px) 0 8px / 10px 1px no-repeat; }
.kids li:last-child { background-size: 1px 50%, 10px 1px; }
.kids button { padding: 0 4px 0 2px; }
.kids svg { margin-right: 4px; }
.kids .cur { background: #d9d9d9; }
.scroll { width: 15px; padding: 6px 0; background: #f0f0f0; display: flex; flex-direction: column; align-items: center; }
.scroll i { width: 100%; height: 300px; margin-top: 56px; margin-bottom: auto; background: #cdcdcd; }
.scroll svg { width: 9px; height: 6px; fill: none; stroke: #555; stroke-width: 2; }

.main { flex: 1; min-width: 0; display: flex; flex-direction: column; }
.edit { height: 29px; padding-left: 4px; gap: 6px; }
.edit button .dd { margin: 0 0 0 -1px; }
.edit button:disabled svg { stroke: none; }
.edit label { margin-left: -2px; }
.floor { display: flex; align-items: center; width: 64px; height: 23px; background: #fff; margin-right: -2px; padding-left: 2px; }
.floor select { appearance: none; border: 0; background: none; flex: 1; min-width: 0; padding: 0; }
.panes { flex: 1; min-height: 0; display: flex; gap: 4px; font-family: "Noto Sans CJK SC", sans-serif; }
.parts { width: 183px; display: flex; flex-direction: column; padding: 3px 0 0; margin-bottom: 1px; }
.search { display: flex; height: 27px; padding: 2px 0 1px 1px; background: #fff; }
.search input { width: 157px; border: 1px solid #6b6b6b; padding: 0 2px 3px; border-radius: 0; }
.search input::placeholder { color: #777; opacity: 1; }
.search button { flex: 1; justify-content: center; }
.list { flex: 1; background: #fff; border: 1px solid #828790; padding-top: 1px; }
.list .par { padding-left: 5px; }
.list .kids { margin-left: 0; padding-left: 31px; background: none; }
.list .kids button { padding: 0 5px 0 3px; }
.list .kids svg { width: 12px; height: 12px; margin-right: 7px; }
.list .kids .sel { background: #316ac5; }

.props { flex: 1; min-width: 0; display: flex; flex-direction: column; background: #fff; border-left: 1px solid #d9d9d9; margin-bottom: 1px; }
.tabs { height: 21px; display: flex; border-bottom: 1px solid #d9d9d9; }
.tabs button { height: 21px; padding: 0 7px; background: #fff; border: 1px solid #d9d9d9; border-width: 1px 1px 0 0; }
.page { flex: 1; min-height: 0; padding: 3px 4px 2px 3px; display: flex; }
.frame { flex: 1; position: relative; border: 1px solid #a0a0a0; }
table { border-collapse: collapse; table-layout: fixed; width: 369px; margin-top: 1px; border-right: 1px solid #bfbfbf; }
.c1 { width: 21px; } .c2 { width: 191px; } .c3 { width: 126px; } .c4 { width: 31px; }
td, th { height: 19px; padding: 0 0 0 3px; border: solid #bfbfbf; border-width: 0 1px 1px 0; line-height: 16px; font-weight: normal; text-align: left; white-space: nowrap; vertical-align: middle; }
td:nth-child(2) { padding-left: 20px; }
td:last-child { padding: 0 0 0 1px; }
thead th { height: 22px; padding: 0; text-align: center; background: linear-gradient(#fff, #ececec); }
thead .hot { background: linear-gradient(#f9dca4, #f1c067); color: #600060; }
tbody th { padding: 0; text-align: center; background: linear-gradient(#fff, #efefef); font: 10px/16px "DejaVu Sans Mono", monospace; }
.blue { color: #00f; }
td.rb { padding-left: 5px; }
.active th { background: #ffd28a; color: #600060; }
.active td:nth-child(2) { background: #0078d7; color: #fff; }
.active td:nth-child(3) { background: #d9eaf9; }
td input { display: block; appearance: none; width: 13px; height: 13px; margin: 1px auto 0; border: 1px solid #222; background: #fff; }
.grp td { color: #888; }
td:nth-child(2) button { float: left; width: 13px; height: 13px; margin: 2px 0 0 -18px; border: 1px solid #aaa; justify-content: center; }
td button svg { width: 9px; height: 9px; stroke: #000; fill: none; }
.mark { position: absolute; left: -34px; top: 150px; width: 464px; height: 82px; fill: none; stroke: #f00; stroke-width: 7; pointer-events: none; }

.status { display: flex; gap: 2px; height: 22px; padding-top: 2px; font-family: "Noto Sans CJK SC", sans-serif; }
.status span { display: flex; align-items: center; border: 1px solid #d5d5d5; background: linear-gradient(#fff, #eee); white-space: nowrap; padding-left: 1px; }
.s1 { width: 148px; } .s2 { width: 78px; } .s3 { width: 98px; } .s4 { width: 48px; } .s5 { flex: 1; } .s6 { width: 70px; }

.taskbar { height: 40px; flex: none; display: flex; background: #020d10; color: #fff; }
.start { width: 48px; background: #000; justify-content: center; }
.start svg { width: 16px; height: 16px; }
.find { width: 344px; background: #333; display: flex; align-items: center; padding: 0 12px 0 8px; gap: 6px; }
.cort { width: 22px; height: 22px; fill: none; stroke: #eee; stroke-width: 3; }
.find input { flex: 1; min-width: 0; background: none; border: 0; padding: 0; font-size: 14px; }
.find input::placeholder { color: #999; opacity: 1; }
.apps { display: flex; gap: 1px; padding-left: 3px; }
.apps button { width: 48px; height: 40px; justify-content: center; border-bottom: 2px solid transparent; padding-top: 2px; }
.apps svg { width: 24px; height: 24px; }
.apps .pinned { margin-left: 4px; }
.apps .on { background: #30393c; border-color: #76b9ed; }
.apps .run { background: linear-gradient(#76b9ed, #76b9ed) 50% 100% / 40px 2px no-repeat; background-origin: border-box; }
.cpu, .clock { text-align: center; line-height: 17px; padding-top: 3px; }
.cpu { margin-left: auto; width: 76px; }
.tray { display: flex; align-items: center; gap: 8px; padding: 0 16px 0 4px; font-size: 14px; }
.tray svg { fill: none; stroke: #fff; }
.tray svg:last-child { stroke: none; }
.kb { width: 24px; height: 14px; }
.clock { width: 60px; }
.note { position: relative; width: 60px; padding-left: 17px; background: #000; border-right: 5px solid #111; }
.note svg { width: 28px; height: 28px; }
.note b { position: absolute; left: 24px; top: 18px; width: 22px; height: 18px; border-radius: 9px; border: 1px solid #999; background: #333; font-size: 11px; line-height: 16px; }
```
